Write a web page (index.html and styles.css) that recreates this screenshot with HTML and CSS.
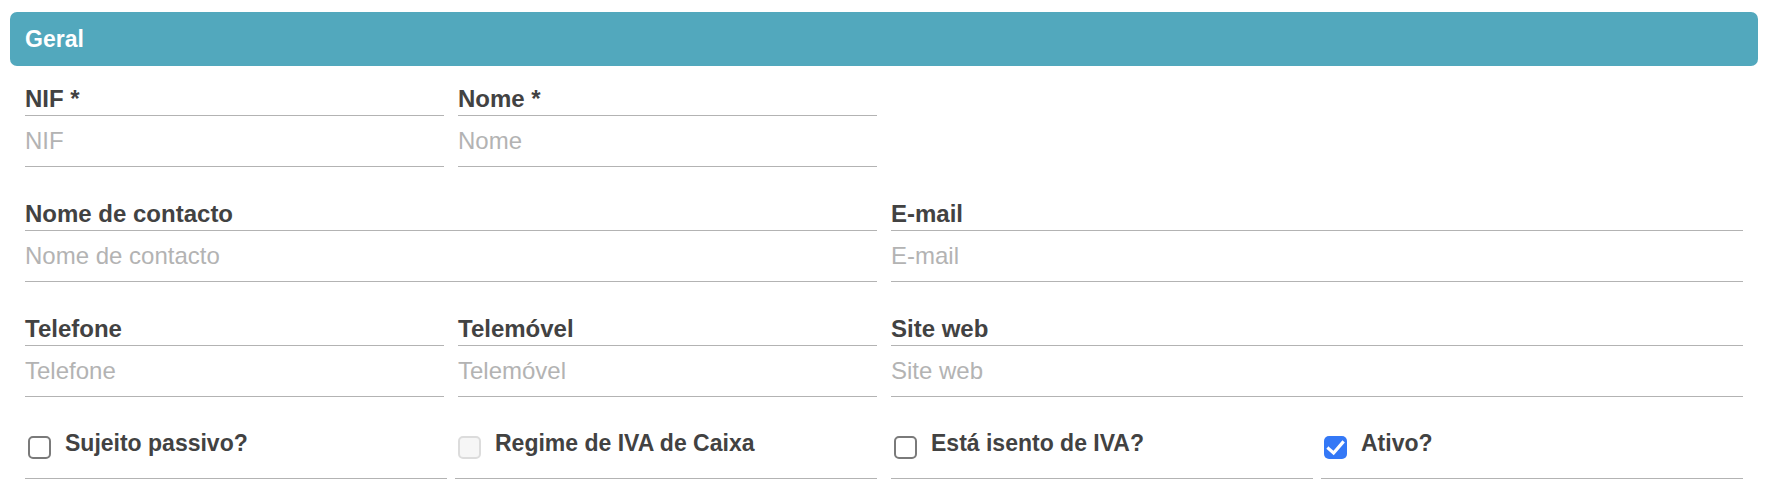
FILE: index.html
```html
<!DOCTYPE html>
<html lang="pt">
<head>
<meta charset="utf-8">
<title>Geral</title>
<link rel="stylesheet" href="styles.css">
</head>
<body>
<section class="panel">
  <header class="panel-head">Geral</header>
  <div class="form">
    <div class="row">
      <div class="field">
        <label class="lbl">NIF *</label>
        <input class="inp" type="text" placeholder="NIF">
      </div>
      <div class="field">
        <label class="lbl">Nome *</label>
        <input class="inp" type="text" placeholder="Nome">
      </div>
    </div>
    <div class="row">
      <div class="field span2">
        <label class="lbl">Nome de contacto</label>
        <input class="inp" type="text" placeholder="Nome de contacto">
      </div>
      <div class="field span2">
        <label class="lbl">E-mail</label>
        <input class="inp" type="text" placeholder="E-mail">
      </div>
    </div>
    <div class="row">
      <div class="field">
        <label class="lbl">Telefone</label>
        <input class="inp" type="text" placeholder="Telefone">
      </div>
      <div class="field">
        <label class="lbl">Telemóvel</label>
        <input class="inp" type="text" placeholder="Telemóvel">
      </div>
      <div class="field span2">
        <label class="lbl">Site web</label>
        <input class="inp" type="text" placeholder="Site web">
      </div>
    </div>
    <div class="row checks">
      <div class="half">
        <div class="check">
          <span class="cb"></span>
          <span class="clbl">Sujeito passivo?</span>
        </div>
        <div class="check">
          <span class="cb cb-disabled"></span>
          <span class="clbl">Regime de IVA de Caixa</span>
        </div>
      </div>
      <div class="half">
        <div class="check">
          <span class="cb"></span>
          <span class="clbl">Está isento de IVA?</span>
        </div>
        <div class="check">
          <span class="cb cb-on"><svg viewBox="0 0 23 23" width="23" height="23"><path d="M4.6 12.6 L9.6 17 L18.6 6.6" fill="none" stroke="#fff" stroke-width="3.2" stroke-linecap="square" stroke-linejoin="miter"/></svg></span>
          <span class="clbl">Ativo?</span>
        </div>
      </div>
    </div>
  </div>
</section>
</body>
</html>
```
FILE: styles.css
```css
html, body {
  margin: 0;
  padding: 0;
  background: #ffffff;
}
body {
  padding: 12px 8px 0 10px;
  font-family: "Liberation Sans", Arial, Helvetica, sans-serif;
}
.panel-head {
  height: 54px;
  box-sizing: border-box;
  background: #52a8bd;
  border-radius: 7px;
  color: #ffffff;
  font-weight: bold;
  font-size: 23px;
  padding: 0 15px;
  display: flex;
  align-items: center;
}
.form {
  padding: 21px 15px 0 15px;
}
.row {
  display: grid;
  grid-template-columns: repeat(4, 1fr);
  column-gap: 14px;
  margin-bottom: 35px;
}
.field {
  display: flex;
  flex-direction: column;
}
.span2 {
  grid-column: span 2;
}
.lbl {
  font-weight: bold;
  font-size: 24px;
  line-height: 24px;
  color: #424242;
  padding-bottom: 4px;
  border-bottom: 1px solid #b3b3b3;
}
.inp {
  display: block;
  width: 100%;
  box-sizing: content-box;
  height: 50px;
  margin: 0;
  padding: 0;
  border: none;
  border-bottom: 1px solid #b3b3b3;
  outline: none;
  background: transparent;
  font-family: "Liberation Sans", Arial, Helvetica, sans-serif;
  font-size: 24px;
  color: #333;
}
.inp::placeholder {
  color: #b3b3b3;
  opacity: 1;
}
.checks {
  grid-template-columns: 1fr 1fr;
  margin-top: -1px;
}
.half {
  display: grid;
  grid-template-columns: 1fr 1fr;
  column-gap: 8px;
}
.check {
  display: flex;
  align-items: flex-start;
  gap: 14px;
  padding: 0 0 19px 3px;
  border-bottom: 1px solid #b3b3b3;
}
.cb {
  flex: none;
  box-sizing: border-box;
  width: 23px;
  height: 23px;
  margin-top: 5px;
  border: 2px solid #7a7a7a;
  border-radius: 5px;
  background: #ffffff;
}
.cb-disabled {
  border-color: #dcdcdc;
  background: #f6f6f6;
}
.cb-on {
  border: none;
  background: #3478f6;
}
.cb-on svg {
  display: block;
}
.clbl {
  font-weight: bold;
  font-size: 23px;
  line-height: 24px;
  color: #424242;
}
```
